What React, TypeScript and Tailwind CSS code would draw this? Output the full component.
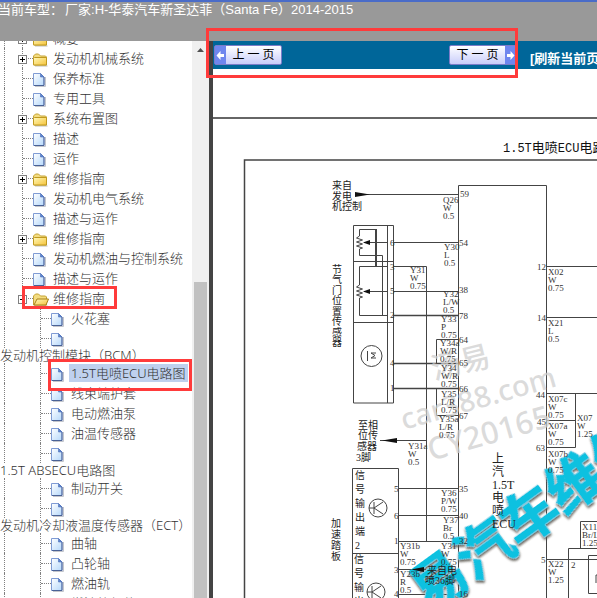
import { ReactNode } from "react";

type Kind = "folder" | "open" | "doc";
type Item = { kind: Kind; label: string; sub?: boolean; wrap?: string; selected?: boolean };

const items: Item[] = [
  { kind: "folder", label: "概要" },
  { kind: "folder", label: "发动机机械系统" },
  { kind: "doc", label: "保养标准" },
  { kind: "doc", label: "专用工具" },
  { kind: "folder", label: "系统布置图" },
  { kind: "doc", label: "描述" },
  { kind: "doc", label: "运作" },
  { kind: "folder", label: "维修指南" },
  { kind: "doc", label: "发动机电气系统" },
  { kind: "doc", label: "描述与运作" },
  { kind: "folder", label: "维修指南" },
  { kind: "doc", label: "发动机燃油与控制系统" },
  { kind: "doc", label: "描述与运作" },
  { kind: "open", label: "维修指南" },
  { kind: "doc", sub: true, label: "火花塞" },
  { kind: "doc", sub: true, label: "", wrap: "发动机控制模块（BCM）" },
  { kind: "doc", sub: true, label: "1.5T电喷ECU电路图", selected: true },
  { kind: "doc", sub: true, label: "线束端护套" },
  { kind: "doc", sub: true, label: "电动燃油泵" },
  { kind: "doc", sub: true, label: "油温传感器" },
  { kind: "doc", sub: true, label: "", wrap: "1.5T ABSECU电路图" },
  { kind: "doc", sub: true, label: "制动开关" },
  { kind: "doc", sub: true, label: "", wrap: "发动机冷却液温度传感器（ECT）" },
  { kind: "doc", sub: true, label: "曲轴" },
  { kind: "doc", sub: true, label: "凸轮轴" },
  { kind: "doc", sub: true, label: "燃油轨" },
  { kind: "doc", sub: true, label: "燃油轨组件" },
];

function DocIcon() {
  return (
    <svg width="13" height="15" viewBox="0 0 13 15" aria-hidden="true">
      <defs>
        <linearGradient id="doc" x1="0" y1="0" x2="1" y2="1">
          <stop offset="0" stopColor="#fff" />
          <stop offset="1" stopColor="#b5d8fb" />
        </linearGradient>
      </defs>
      <path d="M2 14.5H12.5V5" fill="none" stroke="#c4c6cc" />
      <path d="M.5 1.5H7.500L11 5V13.5H.5Z" fill="url(#doc)" stroke="#7f9bd4" />
      <path d="M11 5V13.5H1" fill="none" stroke="#4a6296" />
      <path d="M7.500 1.5V5H11Z" fill="#5f86d0" stroke="#4d6fb5" strokeWidth=".6" />
    </svg>
  );
}

function FolderIcon({ open }: { open?: boolean }) {
  return (
    <svg width="16" height="15" viewBox="0 0 16 15" aria-hidden="true">
      <defs>
        <linearGradient id="fold" x1="0" y1="0" x2="1" y2="1">
          <stop offset="0" stopColor="#fff9b8" />
          <stop offset="1" stopColor="#f5c33c" />
        </linearGradient>
      </defs>
      <path d="M2 14H14.5" stroke="#bdbdbd" />
      <path d="M.5 12V4L2.500 2H5.500L7.500 4H12.500L13.5 5V13H.5Z" fill="#f3dc80" stroke="#c4a235" />
      {open ? (
        <path d="M1 13L4 7H15.5L13 13Z" fill="url(#fold)" stroke="#a8811a" />
      ) : (
        <path d="M.5 6.500Q.5 5.500 1.500 5.500H13.5V13H1.500Q.5 13 .5 12Z" fill="url(#fold)" stroke="#c09a20" />
      )}
    </svg>
  );
}

function TreeRow({ item }: { item: Item }) {
  return (
    <li>
      <div className="flex h-5 items-center pl-1">
        <span className="h-5 w-[18px] shrink-0 border-l border-dotted border-[#808080]" />
        {item.sub && <span className="h-5 w-[18px] shrink-0" />}
        <span className="relative flex h-5 w-[11px] shrink-0 items-center border-l border-dotted border-[#808080]">
          <span className="w-full border-t border-dotted border-[#808080]" />
          {item.kind !== "doc" && (
            <button
              aria-label={item.kind === "open" ? "折叠" : "展开"}
              className="absolute top-[7px] -left-[5px] flex size-[9px] items-center justify-center border border-[#808080] bg-white"
            >
              <svg width="5" height="5" viewBox="0 0 5 5" aria-hidden="true">
                <path d={item.kind === "open" ? "M0 2.5H5" : "M0 2.5H5M2.5 0V5"} stroke="#000" />
              </svg>
            </button>
          )}
        </span>
        <span className="w-5 shrink-0 pt-0.5">
          {item.kind === "doc" ? <DocIcon /> : <FolderIcon open={item.kind === "open"} />}
        </span>
        {item.label && (
          <a
            href="#"
            className={
              item.selected
                ? "-ml-0.5 bg-[#bfd1ee] pr-0.5 pl-0.5 leading-[18px] whitespace-nowrap"
                : "leading-5 whitespace-nowrap"
            }
          >
            {item.label}
          </a>
        )}
      </div>
      {item.wrap && (
        <a href="#" className="block h-[15px] leading-[15px] whitespace-nowrap">
          {item.wrap}
        </a>
      )}
    </li>
  );
}

type Label = [number, number, string];

/* wire code, colour and gauge, stacked; y is the centre of the first line */
const wires: [number, number, string, string, string][] = [
  [443, 200, "Q26", "W", "0.5"],
  [444, 247, "Y30", "L", "0.5"],
  [410, 270, "Y31", "W", "0.75"],
  [443, 294, "Y32", "L/W", "0.5"],
  [441, 319, "Y33", "P", "0.75"],
  [440, 343, "Y34a", "W/R", "0.75"],
  [441, 368, "Y34", "W/R", "0.75"],
  [441, 394, "Y35", "L/R", "0.75"],
  [439, 419, "Y35a", "L/R", "0.75"],
  [408, 446, "Y31a", "W", "0.5"],
  [441, 493, "Y36", "P/W", "0.75"],
  [443, 520, "Y37", "Br", "0.5"],
  [400, 546, "Y31b", "W", "0.75"],
  [400, 574, "Y23b", "R", "0.5"],
  [441, 546, "Y31", "W", "0.75"],
  [548, 272, "X02", "W", "0.75"],
  [548, 323, "X21", "L", "0.5"],
  [548, 399, "X07c", "W", "0.75"],
  [548, 426, "X07a", "W", "0.75"],
  [577, 418, "X07", "W", "1.25"],
  [548, 454, "X07b", "W", "0.75"],
  [582, 527, "X11", "Br/L", "1.25"],
  [548, 564, "X22", "W", "1.25"],
];

const pins: Label[] = [
  [460, 194, "59"], [459, 243, "54"], [459, 290, "38"], [459, 316, "78"],
  [459, 340, "64"], [459, 363, "65"], [459, 389, "66"], [459, 416, "67"],
  [459, 489, "35"], [459, 516, "40"], [459, 541, "32"], [459, 594, "16"],
  [390, 243, "6"], [390, 267, "3"], [390, 291, "5"], [390, 315, "2"], [390, 363, "4"], [390, 388, "1"],
  [394, 489, "5"], [394, 516, "6"], [394, 541, "1"], [394, 570, "3"], [394, 594, "4"],
  [537, 267, "12"], [537, 318, "14"], [536, 395, "44"], [537, 422, "45"], [536, 448, "63"], [541, 560, "5"],
  [571, 565, "2"],
];

const notes: Label[] = [
  [332, 185, "来自"], [332, 196, "发电"], [332, 206, "机控制"],
  [358, 425, "至相"], [358, 435, "位传"], [357, 446, "感器"], [356, 457, "3脚"],
  [427, 570, "来自电"], [425, 580, "喷36脚"],
];

function Column({ x, y, step, text }: { x: number; y: number; step: number; text: string[] }) {
  return (
    <>
      {text.map((t, i) => (
        <text key={i} x={x} y={y + i * step} dominantBaseline="central">
          {t}
        </text>
      ))}
    </>
  );
}

function Diagram() {
  return (
    <svg
      role="img"
      aria-label="1.5T电喷ECU电路图"
      width="384"
      height="529"
      viewBox="213 69 384 529"
      className="block shrink-0 font-['Liberation_Serif','Noto_Sans_CJK_SC',serif]"
    >
      <defs>
        <filter id="bevel" x="-10%" y="-30%" width="120%" height="160%">
          <feDropShadow dx="0" dy="0" stdDeviation="0.6" floodColor="#fff" floodOpacity="1" />
          <feDropShadow dx="-1" dy="2" stdDeviation="1" floodColor="#5c5650" floodOpacity="0.9" />
        </filter>
      </defs>

      <g fill="none" stroke="#444" strokeWidth="1">
        <path d="M213 118H597" stroke="#666" strokeWidth="2" />
        <path d="M597 160H244.500V598" strokeWidth="1.500" />
        <path d="M458.500 598V185.500H546.500V598" />
        <path d="M360 194.500H458.500" />
        <path d="M353.500 225.500H393.500V403H353.500ZM387.500 225.500V403M353.500 261.500H393.500M353.500 322.500H393.500" />
        <path d="M359.500 236V229.500H376M359.500 249V255.500H382.500V315M376 266.500H387M359.500 285V266.500H376M359.500 298V315.500H387" />
        <path d="M376 229V267" strokeWidth="2" />
        <path d="M359.500 236l-3 2 6 2-6 2 6 2-6 2 6 2-3 1M359.500 285l-3 2 6 2-6 2 6 2-6 2 6 2-3 1" />
        <path d="M364 242.500H387M394 242.500H458M394 266.500H426.500V541M364 291.500H387M394 291.500H458" />
        <path d="M394 315.500H458M394 363.500H458M394 388.500H458" strokeWidth="1.500" />
        <path d="M436.500 339.500H458.500M436.500 339.500V363M436.500 388V415.500H458.500M380 440.500H426.500" />
        <path d="M352.500 598V468.500H398.500V598M352.500 553.500H398.500M398.500 488.500H458.500M398.500 515.500H458.500M398.500 541.500H458.500M398.500 569.500H426M398.500 594.500H458.500" />
        <path d="M546.500 266.500H597M546.500 317.500H597M546.500 393.500H597M575.500 393.500V447.500H546.500M546.500 420.500H575.500" />
        <path d="M546.500 559.500H597M568.500 598V548.500H597M580.500 548V521.500H597M597 555.500H588.500V593.500H597M596 583V575H597" />
        <circle cx="371.500" cy="356" r="10.500" />
        <path d="M367.500 351V361M376 353H371L375 355.500 371 358H376" />
        <circle cx="378" cy="508" r="9" />
        <path d="M374 502V514M369 508H374M383 502L374 508L383 514" />
        <circle cx="376" cy="592" r="9" />
        <path d="M372 586V598M367 592H372M381 586L372 592L381 598" />
      </g>
      <g fill="#111">
        <path d="M370 194.500L355 192V197Z" />
        <path d="M363 242.500L370 240V245Z" />
        <path d="M363 291.500L370 289V294Z" />
        <path d="M382 440.500L397 438V443Z" />
      </g>

      <g fill="#cfcfcf" fillOpacity="0.75" className="font-['Noto_Sans','Noto_Sans_CJK_SC',sans-serif]" fontWeight="500">
        <text transform="translate(434 380) rotate(-14)" fontSize="30">汤易</text>
        <text transform="translate(404 430) rotate(-16)" fontSize="29">car388.com</text>
        <text transform="translate(431 461) rotate(-16)" fontSize="31">CY20165</text>
      </g>

      <g transform="translate(428 614) rotate(-36)" filter="url(#bevel)">
        <text
          fill="#10c1e0"
          stroke="#10c1e0"
          strokeWidth="1.5"
          fontSize="56"
          fontWeight="700"
          className="font-['Noto_Sans_CJK_SC',sans-serif]"
        >
          易汽车维修
        </text>
      </g>

      <path d="M411 569.500L424 567V572Z" fill="#111" />
      <g fill="#333" fontSize="9">
        {wires.map(([x, y, ...lines], i) => (
          <Column key={i} x={x} y={y} step={8} text={lines} />
        ))}
        {pins.map(([x, y, t], i) => (
          <text key={i} x={x} y={y} dominantBaseline="central">{t}</text>
        ))}
      </g>
      <g fill="#222" fontSize="10">
        {notes.map(([x, y, t], i) => (
          <text key={i} x={x} y={y} dominantBaseline="central">{t}</text>
        ))}
        <Column x={332} y={269} step={10.5} text={[..."节气门位置传感器"]} />
        <Column x={331} y={523} step={11} text={[..."加速踏板"]} />
        <Column x={355} y={475} step={14} text={[..."信号输出端2"]} />
        <Column x={354} y={559} step={14} text={[..."信号输出"]} />
      </g>
      <g fill="#222" fontSize="12">
        <Column x={492} y={459} step={13} text={["上", "汽", "1.5T", "电", "喷", "ECU"]} />
      </g>
      <text
        x="503"
        y="152"
        fontSize="13"
        fill="#111"
        className="font-['Liberation_Mono','Noto_Sans_CJK_SC',monospace]"
      >
        <tspan fontSize="12">1.5T</tspan>电喷<tspan fontSize="12">ECU</tspan>电路图
      </text>
    </svg>
  );
}

function PageButton({ children, next }: { children: ReactNode; next?: boolean }) {
  const arrow = (
    <span className="flex w-[11px] items-center justify-center bg-[#6f86ee]">
      <svg width="9" height="9" viewBox="0 0 9 9" aria-hidden="true">
        <path d={next ? "M8.500 4.500L4.500 0V3H1V6H4.500V9Z" : "M.5 4.500L4.500 0V3H8V6H4.500V9Z"} fill="#fff" />
      </svg>
    </span>
  );
  return (
    <button className="flex h-5 w-[68px] shrink-0 rounded-xs border border-[#7c7cc8] bg-linear-to-b from-white to-[#c9cdfa] text-[12px] text-black">
      {!next && arrow}
      <span className="flex-1 leading-[18px] whitespace-nowrap">{children}</span>
      {next && arrow}
    </button>
  );
}

export default function App() {
  return (
    <div className="relative flex h-screen flex-col overflow-hidden bg-white font-['Noto_Sans','Noto_Sans_CJK_SC',sans-serif] text-[13px] text-[#333]">
      <header className="h-[41px] shrink-0 overflow-hidden border-t-2 border-[#4a6cc8] bg-[#999] font-['Liberation_Sans','Noto_Sans_CJK_SC',sans-serif] leading-4 whitespace-nowrap text-white">
        <h1 className="-ml-0.5">
          当前车型：<span className="ml-0.5">厂家:H-华泰汽车新圣达菲（Santa Fe）2014-2015</span>
        </h1>
      </header>

      <div className="flex min-h-0 flex-1">
        <nav className="w-48 shrink-0 overflow-hidden font-light">
          <ul className="-mt-[13px]">
            {items.map((item, i) => (
              <TreeRow key={i} item={item} />
            ))}
          </ul>
        </nav>
        <div className="flex w-[17px] shrink-0 flex-col items-center bg-[#f0f0f0]" aria-hidden="true">
          <svg width="7" height="4" viewBox="0 0 7 4" className="mt-[7px] shrink-0">
            <path d="M0 4L3.500 0L7 4Z" fill="#505050" />
          </svg>
          <div className="mt-[230px] w-[13px] flex-1 bg-[#c1c1c1]" />
        </div>

        <main className="flex min-w-0 flex-1 flex-col overflow-hidden border-l-4 border-[#444]">
          <div className="flex h-7 shrink-0 items-center bg-[#069] pl-px">
            <PageButton>上 一 页</PageButton>
            <div className="w-[167px] shrink-0" />
            <PageButton next>下 一 页</PageButton>
            <a href="#" className="ml-[13px] pt-2 font-['Liberation_Sans','Noto_Sans_CJK_SC',sans-serif] leading-5 font-bold whitespace-nowrap text-white">
              [刷新当前页]
            </a>
          </div>
          <Diagram />
        </main>
      </div>

      <div className="pointer-events-none absolute top-[28px] left-[206px] h-[50px] w-[312px] border-3 border-[#ff3b3b]" />
      <div className="pointer-events-none absolute top-[286px] left-[22px] h-[23px] w-[95px] border-3 border-[#ff3b3b]" />
      <div className="pointer-events-none absolute top-[359px] left-[48px] h-[32px] w-[144px] border-3 border-[#ff3b3b]" />
    </div>
  );
}
